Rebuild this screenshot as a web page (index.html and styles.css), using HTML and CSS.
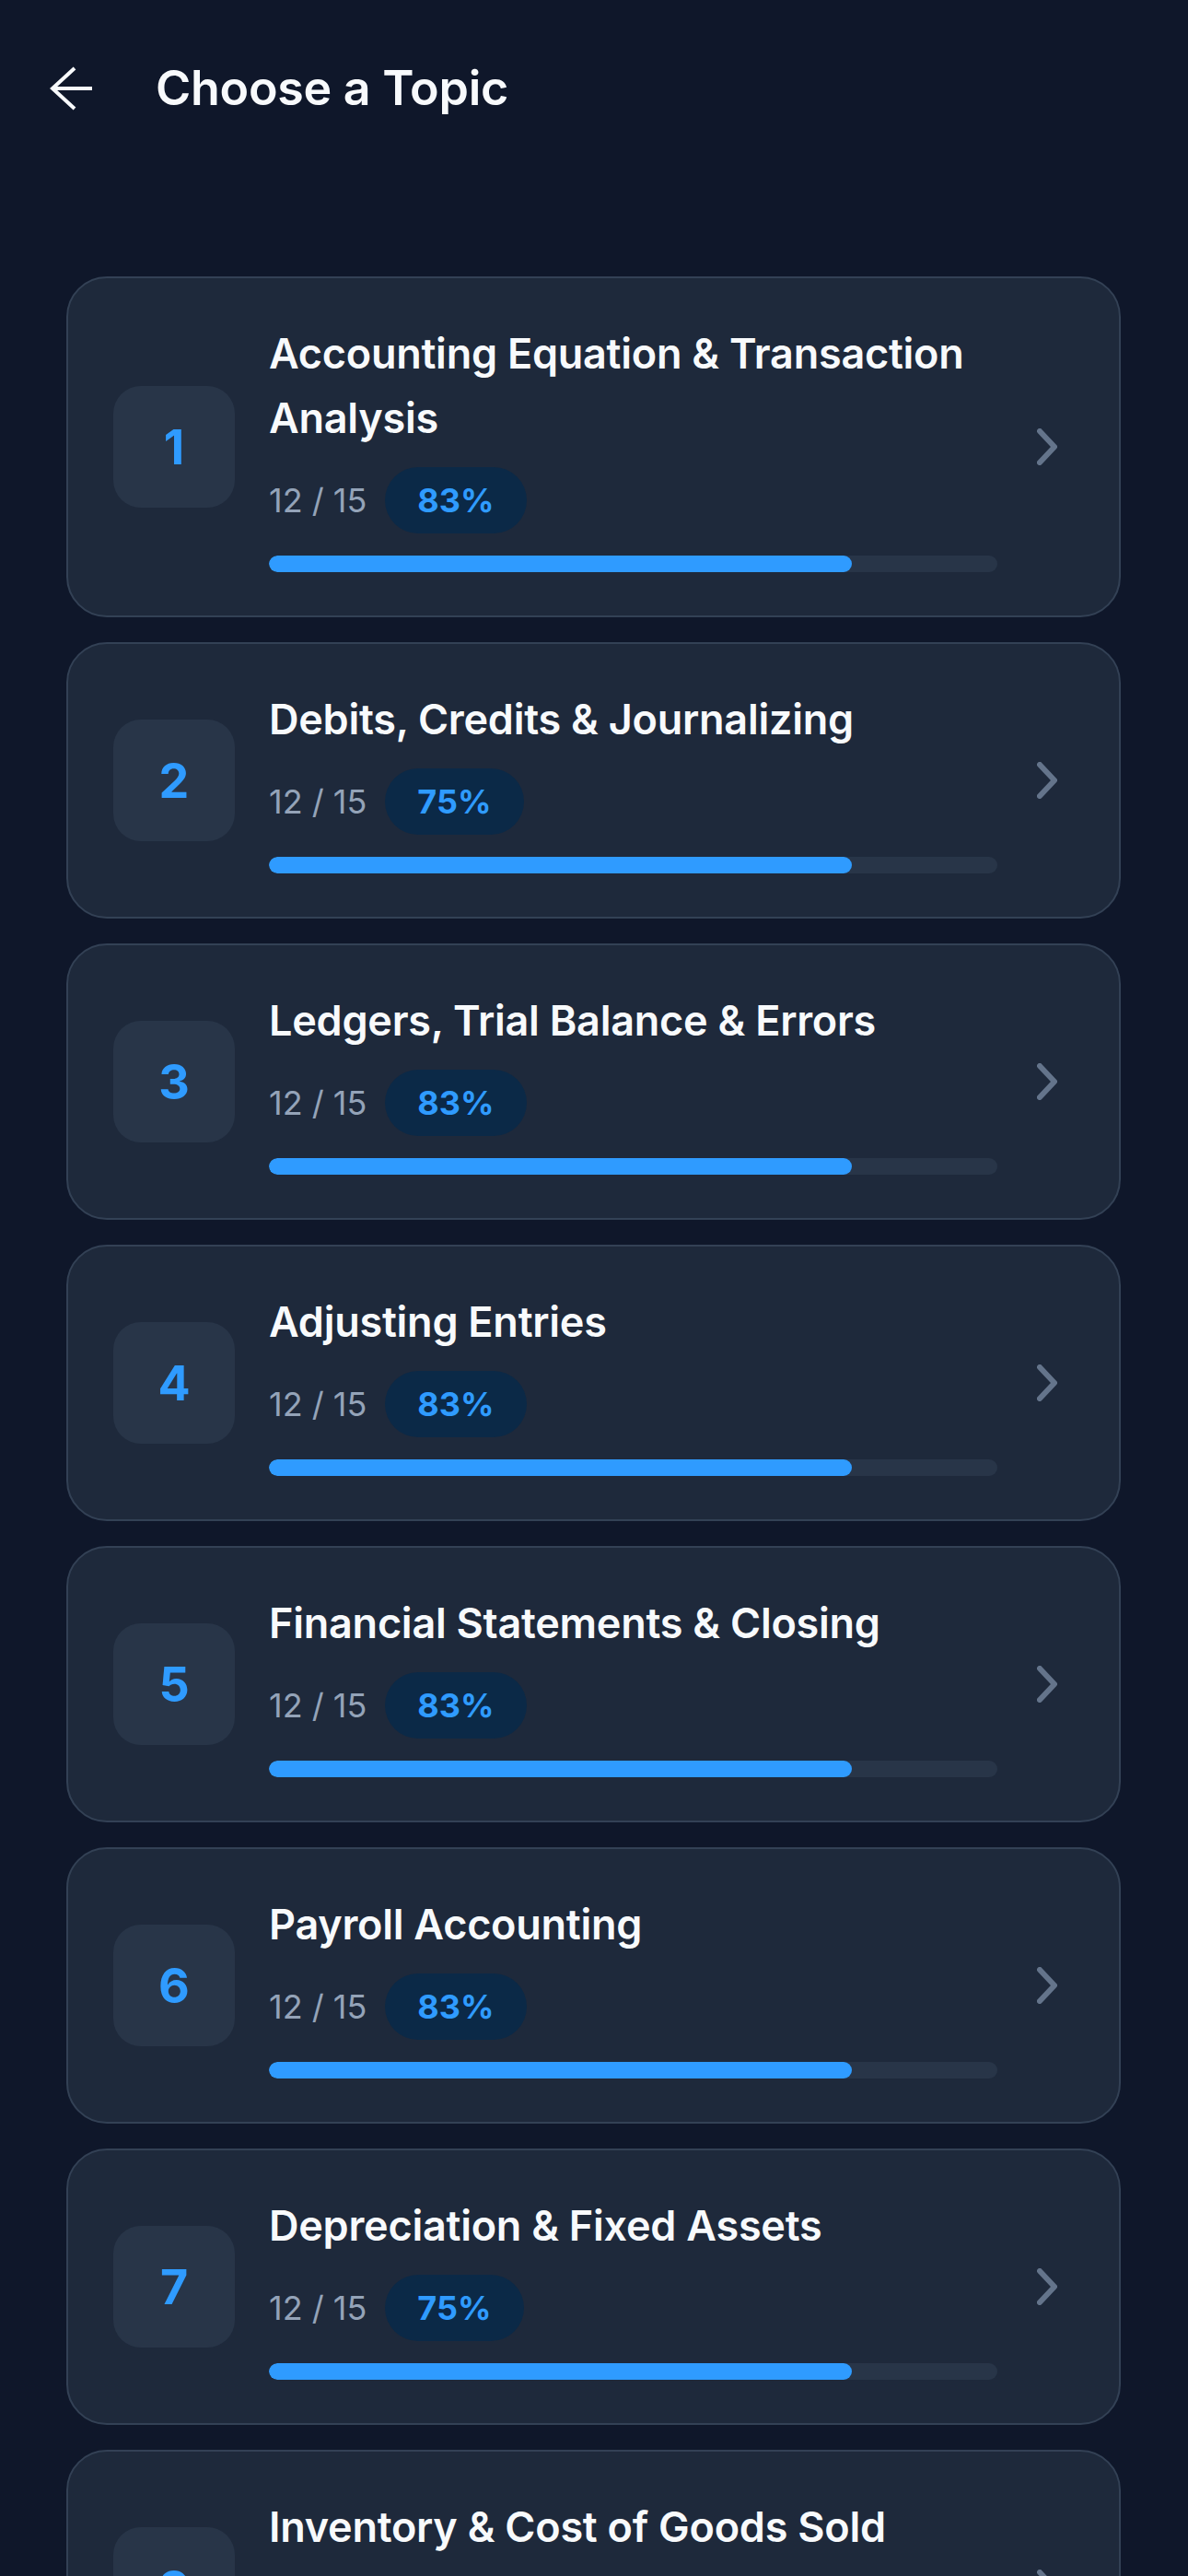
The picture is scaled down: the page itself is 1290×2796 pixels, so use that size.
FILE: index.html
```html
<!DOCTYPE html>
<html lang="en">
<head>
<meta charset="utf-8">
<title>Choose a Topic</title>
<link rel="stylesheet" href="styles.css">
</head>
<body>
<header class="topbar">
  <svg class="back" viewBox="0 0 48 48" width="48" height="48" aria-hidden="true">
    <path d="M46 24H3M27 2L3 24L27 46" fill="none" stroke="#f8fafc" stroke-width="4" stroke-linecap="butt" stroke-linejoin="miter"/>
  </svg>
  <h1 class="title">Choose a Topic</h1>
</header>
<main class="list">
  <div class="card">
    <div class="num">1</div>
    <div class="info">
      <h2 class="name">Accounting Equation &amp; Transaction Analysis</h2>
      <div class="stats"><span class="count">12 / 15</span><span class="badge">83%</span></div>
      <div class="track"><div class="fill" style="width:80%"></div></div>
    </div>
    <svg class="chev" viewBox="0 0 22 40" width="22" height="40" aria-hidden="true"><polyline points="3,3 19,20 3,37" fill="none" stroke="#64748b" stroke-width="6" stroke-linecap="round" stroke-linejoin="round"/></svg>
  </div>
  <div class="card">
    <div class="num">2</div>
    <div class="info">
      <h2 class="name">Debits, Credits &amp; Journalizing</h2>
      <div class="stats"><span class="count">12 / 15</span><span class="badge">75%</span></div>
      <div class="track"><div class="fill" style="width:80%"></div></div>
    </div>
    <svg class="chev" viewBox="0 0 22 40" width="22" height="40" aria-hidden="true"><polyline points="3,3 19,20 3,37" fill="none" stroke="#64748b" stroke-width="6" stroke-linecap="round" stroke-linejoin="round"/></svg>
  </div>
  <div class="card">
    <div class="num">3</div>
    <div class="info">
      <h2 class="name">Ledgers, Trial Balance &amp; Errors</h2>
      <div class="stats"><span class="count">12 / 15</span><span class="badge">83%</span></div>
      <div class="track"><div class="fill" style="width:80%"></div></div>
    </div>
    <svg class="chev" viewBox="0 0 22 40" width="22" height="40" aria-hidden="true"><polyline points="3,3 19,20 3,37" fill="none" stroke="#64748b" stroke-width="6" stroke-linecap="round" stroke-linejoin="round"/></svg>
  </div>
  <div class="card">
    <div class="num">4</div>
    <div class="info">
      <h2 class="name">Adjusting Entries</h2>
      <div class="stats"><span class="count">12 / 15</span><span class="badge">83%</span></div>
      <div class="track"><div class="fill" style="width:80%"></div></div>
    </div>
    <svg class="chev" viewBox="0 0 22 40" width="22" height="40" aria-hidden="true"><polyline points="3,3 19,20 3,37" fill="none" stroke="#64748b" stroke-width="6" stroke-linecap="round" stroke-linejoin="round"/></svg>
  </div>
  <div class="card">
    <div class="num">5</div>
    <div class="info">
      <h2 class="name">Financial Statements &amp; Closing</h2>
      <div class="stats"><span class="count">12 / 15</span><span class="badge">83%</span></div>
      <div class="track"><div class="fill" style="width:80%"></div></div>
    </div>
    <svg class="chev" viewBox="0 0 22 40" width="22" height="40" aria-hidden="true"><polyline points="3,3 19,20 3,37" fill="none" stroke="#64748b" stroke-width="6" stroke-linecap="round" stroke-linejoin="round"/></svg>
  </div>
  <div class="card">
    <div class="num">6</div>
    <div class="info">
      <h2 class="name">Payroll Accounting</h2>
      <div class="stats"><span class="count">12 / 15</span><span class="badge">83%</span></div>
      <div class="track"><div class="fill" style="width:80%"></div></div>
    </div>
    <svg class="chev" viewBox="0 0 22 40" width="22" height="40" aria-hidden="true"><polyline points="3,3 19,20 3,37" fill="none" stroke="#64748b" stroke-width="6" stroke-linecap="round" stroke-linejoin="round"/></svg>
  </div>
  <div class="card">
    <div class="num">7</div>
    <div class="info">
      <h2 class="name">Depreciation &amp; Fixed Assets</h2>
      <div class="stats"><span class="count">12 / 15</span><span class="badge">75%</span></div>
      <div class="track"><div class="fill" style="width:80%"></div></div>
    </div>
    <svg class="chev" viewBox="0 0 22 40" width="22" height="40" aria-hidden="true"><polyline points="3,3 19,20 3,37" fill="none" stroke="#64748b" stroke-width="6" stroke-linecap="round" stroke-linejoin="round"/></svg>
  </div>
  <div class="card">
    <div class="num">8</div>
    <div class="info">
      <h2 class="name">Inventory &amp; Cost of Goods Sold</h2>
      <div class="stats"><span class="count">12 / 15</span><span class="badge">83%</span></div>
      <div class="track"><div class="fill" style="width:80%"></div></div>
    </div>
    <svg class="chev" viewBox="0 0 22 40" width="22" height="40" aria-hidden="true"><polyline points="3,3 19,20 3,37" fill="none" stroke="#64748b" stroke-width="6" stroke-linecap="round" stroke-linejoin="round"/></svg>
  </div>
</main>
</body>
</html>
```

FILE: styles.css
```css
* { box-sizing: border-box; }
html, body {
  margin: 0;
  padding: 0;
  background: #0f172a;
}
body {
  width: 1290px;
  min-height: 2796px;
  font-family: Inter, "Noto Sans", "Liberation Sans", sans-serif;
  color: #f8fafc;
}
.topbar {
  height: 192px;
  display: flex;
  align-items: center;
  padding-left: 54px;
}
.back {
  display: block;
  flex: none;
}
.title {
  margin: 0 0 0 67px;
  font-size: 52px;
  font-weight: 600;
  line-height: 1.2;
  letter-spacing: -0.3px;
  color: #f8fafc;
}
.list {
  padding: 108px 73px 40px 72px;
  display: flex;
  flex-direction: column;
  gap: 27px;
}
.card {
  display: flex;
  align-items: center;
  background: #1e293b;
  border: 2px solid #334155;
  border-radius: 44px;
  padding: 47px 67px 47px 49px;
}
.num {
  flex: none;
  width: 132px;
  height: 132px;
  border-radius: 30px;
  background: #283548;
  display: flex;
  align-items: center;
  justify-content: center;
  font-size: 52px;
  font-weight: 700;
  color: #2f9bff;
  margin-right: 37px;
}
.info {
  flex: 1;
  min-width: 0;
}
.name {
  margin: 0;
  font-size: 45px;
  line-height: 70px;
  font-weight: 600;
  color: #f8fafc;
  letter-spacing: -0.25px;
}
.stats {
  margin-top: 18px;
  height: 72px;
  display: flex;
  align-items: center;
  gap: 20px;
}
.count {
  font-size: 36px;
  font-weight: 400;
  color: #94a3b8;
}
.badge {
  height: 72px;
  padding: 0 35px;
  border-radius: 36px;
  background: #0b2947;
  color: #2f9bff;
  font-size: 36px;
  font-weight: 700;
  display: flex;
  align-items: center;
}
.track {
  margin-top: 24px;
  height: 18px;
  border-radius: 9px;
  background: #283548;
  overflow: hidden;
}
.fill {
  height: 100%;
  border-radius: 9px;
  background: #2f9bff;
}
.chev {
  flex: none;
  display: block;
  margin-left: 43px;
}
```
